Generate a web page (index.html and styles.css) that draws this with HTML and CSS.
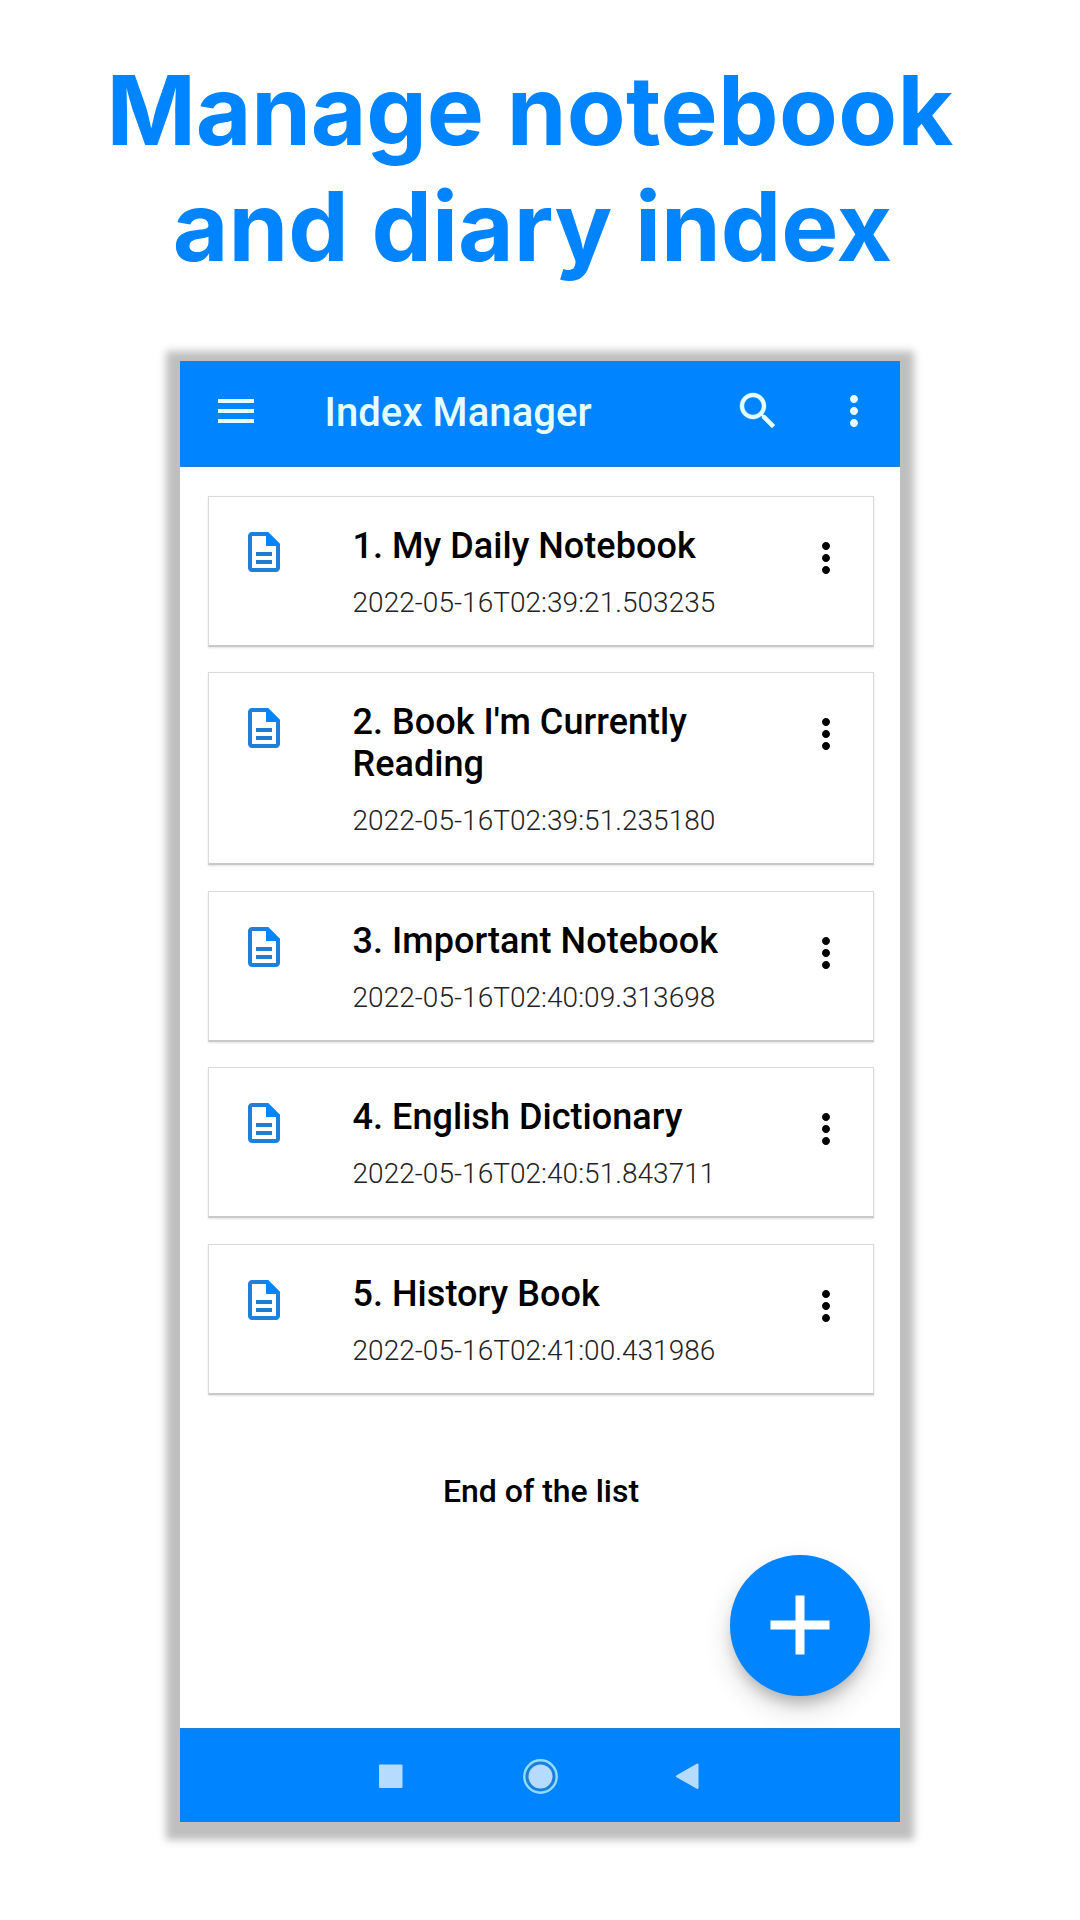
FILE: index.html
```html
<!DOCTYPE html>
<html lang="en">
<head>
<meta charset="utf-8">
<title>Index Manager</title>
<link rel="stylesheet" href="styles.css">
</head>
<body>
<svg class="sprite" aria-hidden="true">
  <symbol id="doc" viewBox="0 0 24 24">
    <path fill="#1f80dc" d="M14 2H6c-1.1 0-2 .9-2 2v16c0 1.1.9 2 2 2h12c1.1 0 2-.9 2-2V8l-6-6zM6 20V4h7v5h5v11H6z"/>
    <path fill="#0584ff" d="M13 2.6V9h6.400l.6-1-6-6z"/>
    <path fill="#1f7fd0" d="M8 16h8v2H8zM8 12h8v2H8z"/>
  </symbol>
  <symbol id="more" viewBox="0 0 24 24">
    <path d="M12 8c1.1 0 2-.9 2-2s-.9-2-2-2-2 .9-2 2 .9 2 2 2zm0 2c-1.1 0-2 .9-2 2s.9 2 2 2 2-.9 2-2-.9-2-2-2zm0 6c-1.1 0-2 .9-2 2s.9 2 2 2 2-.9 2-2-.9-2-2-2z"/>
  </symbol>
</svg>

<h1 class="headline">
  <span class="headline-top"><span class="tight">Manage</span> notebook</span>
  <span class="headline-bottom">and diary index</span>
</h1>

<div class="phone">
  <header class="appbar">
    <svg class="icon" viewBox="0 0 24 24"><path d="M3 18h18v-2H3v2zm0-5h18v-2H3v2zm0-7v2h18V6H3z"/></svg>
    <div class="appbar-title">Index Manager</div>
    <svg class="icon appbar-search" viewBox="0 0 24 24"><path d="M15.500 14h-.79l-.28-.27C15.410 12.590 16 11.110 16 9.500 16 5.910 13.090 3 9.500 3S3 5.910 3 9.500 5.910 16 9.500 16c1.610 0 3.090-.59 4.230-1.570l.27.28v.79l5 4.990L20.490 19l-4.990-5zm-6 0C7.010 14 5 11.990 5 9.500S7.010 5 9.500 5 14 7.010 14 9.500 11.990 14 9.500 14z"/></svg>
    <svg class="icon appbar-more"><use href="#more"/></svg>
  </header>

  <main class="list">
    <article class="card">
      <svg class="icon card-doc"><use href="#doc"/></svg>
      <div class="card-text">
        <h2 class="card-title">1. My Daily Notebook</h2>
        <div class="card-date">2022-05-16T02:39:21.503235</div>
      </div>
      <svg class="icon card-more"><use href="#more"/></svg>
    </article>
    <article class="card">
      <svg class="icon card-doc"><use href="#doc"/></svg>
      <div class="card-text">
        <h2 class="card-title">2. Book I'm Currently Reading</h2>
        <div class="card-date">2022-05-16T02:39:51.235180</div>
      </div>
      <svg class="icon card-more"><use href="#more"/></svg>
    </article>
    <article class="card">
      <svg class="icon card-doc"><use href="#doc"/></svg>
      <div class="card-text">
        <h2 class="card-title">3. Important Notebook</h2>
        <div class="card-date">2022-05-16T02:40:09.313698</div>
      </div>
      <svg class="icon card-more"><use href="#more"/></svg>
    </article>
    <article class="card">
      <svg class="icon card-doc"><use href="#doc"/></svg>
      <div class="card-text">
        <h2 class="card-title">4. English Dictionary</h2>
        <div class="card-date">2022-05-16T02:40:51.843711</div>
      </div>
      <svg class="icon card-more"><use href="#more"/></svg>
    </article>
    <article class="card">
      <svg class="icon card-doc"><use href="#doc"/></svg>
      <div class="card-text">
        <h2 class="card-title">5. History Book</h2>
        <div class="card-date">2022-05-16T02:41:00.431986</div>
      </div>
      <svg class="icon card-more"><use href="#more"/></svg>
    </article>
    <p class="list-end">End of the list</p>
  </main>

  <button class="fab" aria-label="Add">
    <svg class="fab-icon" viewBox="0 0 60 60"><path d="M25.500 .5h9v25h25v9h-25v25h-9v-25h-25v-9h25z"/></svg>
  </button>

  <nav class="navbar">
    <svg class="nav-icon" viewBox="0 0 40 40"><rect x="8" y="8.500" width="23.500" height="23.500" rx="1"/></svg>
    <svg class="nav-icon" viewBox="0 0 40 40"><circle cx="20.500" cy="20.500" r="16.200" fill="#1a7fd9" stroke="#8fdcff" stroke-width="2.400"/><circle cx="20.500" cy="20.500" r="12"/></svg>
    <svg class="nav-icon" viewBox="0 0 40 40"><path d="M7.600 19.300 27.800 7.800Q29.500 7 29.500 8.800V31.800Q29.500 33.600 27.800 32.800L7.600 21.300Q6 20.300 7.600 19.300z"/></svg>
  </nav>
</div>
</body>
</html>
```

FILE: styles.css
```css
* {
  box-sizing: border-box;
}

body {
  margin: 0;
  height: 1920px;
  display: flex;
  flex-direction: column;
  align-items: center;
  background: #fff;
  font-family: Roboto, "Liberation Sans", sans-serif;
  overflow: hidden;
}

.sprite {
  position: absolute;
  width: 0;
  height: 0;
}

.headline {
  display: flex;
  flex-direction: column;
  align-items: center;
  margin: 0;
  padding-top: 52px;
  height: 361px;
  font: 700 96px/116px Inter, sans-serif;
  color: #0084ff;
  white-space: nowrap;
}

.headline-top {
  padding-right: 20px;
  letter-spacing: .35px;
}

.tight {
  letter-spacing: -.25px;
}

.headline-bottom {
  padding-right: 15px;
}

.phone {
  position: relative;
  display: flex;
  flex-direction: column;
  flex: none;
  width: 720px;
  height: 1461px;
  background: #fff;
  box-shadow: 0 3.5px 8px 14px #bfbfbf;
}

.icon {
  flex: none;
  width: 48px;
  height: 48px;
}

.appbar {
  display: flex;
  align-items: center;
  height: 106px;
  padding: 0 22px 6px 32px;
  background: #0084ff;
  border-bottom: 1px solid #1f80dc;
  color: #e6ffff;
  fill: #e6ffff;
}

.appbar-title {
  flex: 1;
  padding: 4px 0 0 64.5px;
  font-size: 40px;
  font-weight: 500;
  line-height: 48px;
  letter-spacing: .08px;
}

.appbar-search {
  stroke: #e6ffff;
  stroke-width: .2;
}

.appbar-more {
  margin-left: 48px;
}

.list {
  flex: 1;
  display: flex;
  flex-direction: column;
  gap: 25.5px;
  padding: 28.5px 26px 0 28px;
}

.card {
  display: flex;
  align-items: flex-start;
  padding: 28px 23px 25px 31px;
  border: 1px solid #dadada;
  border-bottom: 2px solid #c8c8c8;
  box-shadow: 0 1px 2px #e2e2e2;
}

.card-doc {
  margin-top: 3px;
}

.card-text {
  flex: 1;
  padding: 0 20px 0 64.5px;
}

.card-title {
  margin: 0 0 19px;
  font-size: 36px;
  font-weight: 500;
  line-height: 42px;
  letter-spacing: .04px;
  color: #000;
}

.card-date {
  padding-bottom: 1px;
  font-size: 28px;
  font-weight: 300;
  line-height: 33px;
  letter-spacing: .04px;
  color: #222;
}

.card-more {
  margin-top: 9px;
}

.list-end {
  margin: 51.5px 0 0;
  font-size: 32px;
  font-weight: 500;
  line-height: 38px;
  text-align: center;
  color: #000;
}

.fab {
  position: absolute;
  right: 30px;
  bottom: 126.5px;
  display: grid;
  place-items: center;
  width: 140.5px;
  height: 140.5px;
  padding: 0;
  border: 0;
  border-radius: 50%;
  background: #0084ff;
  box-shadow: 0 10px 14px -4px rgba(0, 0, 0, .2), 0 12px 28px rgba(0, 0, 0, .16);
}

.fab-icon {
  width: 60px;
  height: 60px;
  fill: #fff;
}

.navbar {
  display: flex;
  justify-content: center;
  align-items: center;
  gap: 109px;
  height: 94px;
  background: #0084ff;
  border-top: 1px solid #1f80dc;
  fill: #b5dbff;
}

.nav-icon {
  width: 40px;
  height: 40px;
}
```
